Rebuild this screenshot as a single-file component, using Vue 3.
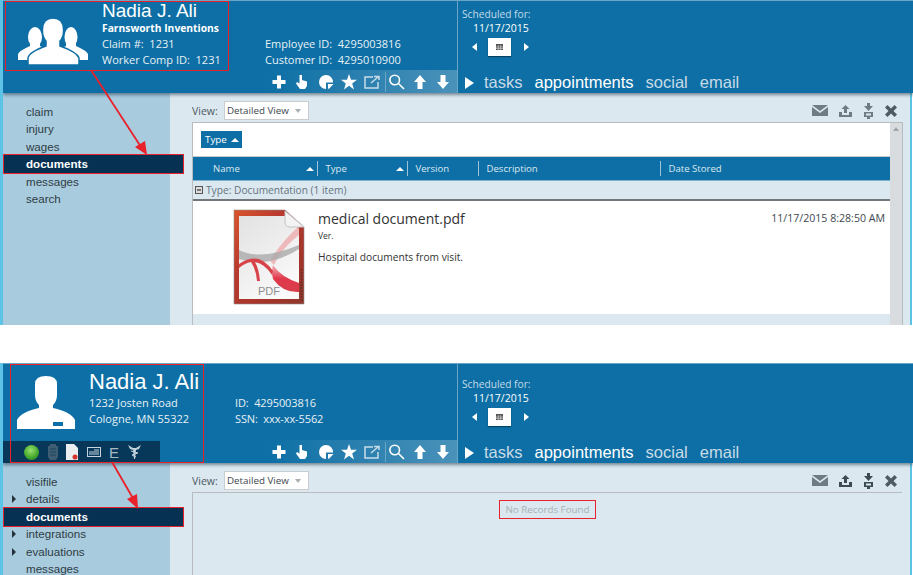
<script setup>
const tools = ['plus', 'hand', 'pie', 'star', 'share', 'search', 'up', 'down']
const tabs = [
  { label: 'tasks', active: false },
  { label: 'appointments', active: true },
  { label: 'social', active: false },
  { label: 'email', active: false }
]
const panels = [
  {
    id: 'claim',
    lines: ['Claim #:  1231', 'Worker Comp ID:  1231'],
    org: 'Farnsworth Inventions',
    ids: ['Employee ID:  4295003816', 'Customer ID:  4295010900'],
    nav: [
      { t: 'claim' }, { t: 'injury' }, { t: 'wages' },
      { t: 'documents', sel: true }, { t: 'messages' }, { t: 'search' }
    ]
  },
  {
    id: 'person',
    lines: ['1232 Josten Road', 'Cologne, MN 55322'],
    ids: ['ID:  4295003816', 'SSN:  xxx-xx-5562'],
    nav: [
      { t: 'visifile' }, { t: 'details', caret: true },
      { t: 'documents', sel: true }, { t: 'integrations', caret: true },
      { t: 'evaluations', caret: true }, { t: 'messages' }
    ]
  }
]
const cols = [
  { t: 'Name', w: 124, sort: true },
  { t: 'Type', w: 90, sort: true },
  { t: 'Version', w: 71 },
  { t: 'Description', w: 182 },
  { t: 'Date Stored', w: 230 }
]
</script>

<template>
  <div class="page">
    <section v-for="p in panels" :key="p.id" class="panel" :class="'panel-' + p.id">
      <header class="hd">
        <div class="hd-left">
          <div class="top">
            <div class="who">
              <svg v-if="p.id === 'claim'" class="avatar" width="70" height="48" viewBox="0 0 70 48">
                <g fill="#fff">
                  <ellipse cx="17" cy="20" rx="7" ry="10" />
                  <path d="M0 43V37Q1 34 12 29V26H22V29L30 33V43Z" />
                  <ellipse cx="53" cy="20" rx="6.500" ry="10" />
                  <path d="M70 43V37Q69 34 58 29V26H48V29L40 33V43Z" />
                  <g stroke="#0d6fa5" stroke-width="1.500">
                    <path d="M10 48V41Q11 35 28 29V24Q24 20 24.500 12Q25 1 35 1Q45 1 45.500 12Q46 20 42 24V29Q59 35 61 41V48Z" />
                  </g>
                </g>
              </svg>
              <svg v-else class="avatar" width="58" height="55" viewBox="0 0 58 55">
                <path fill="#fff" d="M18 9Q18 1 29 1Q40 1 40 9V20Q40 26 36 30V33Q54 37 58 45V54H0V45Q4 37 22 33V30Q18 26 18 20Z" />
                <rect x="36" y="47" width="10" height="4" fill="#0d6fa5" />
              </svg>
              <div class="who-text">
                <div class="name">Nadia J. Ali</div>
                <div v-if="p.org" class="line org">{{ p.org }}</div>
                <div v-for="l in p.lines" :key="l" class="line">{{ l }}</div>
              </div>
            </div>
            <div class="ids">
              <div v-for="l in p.ids" :key="l" class="line">{{ l }}</div>
            </div>
          </div>
          <div class="bottom">
            <div v-if="p.id === 'person'" class="status">
              <span class="dot"></span>
              <svg width="10" height="17" viewBox="0 0 10 17"><path fill="#3f5e74" d="M2 0H8V2H10V13L8 16H2L0 13V2H2Z" /><path stroke="#1f4560" d="M2 5H8M2 8H8M2 11H8" /></svg>
              <svg width="12" height="16" viewBox="0 0 12 16"><path fill="#e9edf0" d="M0 0H8L12 4V16H0Z" /><circle cx="9" cy="13" r="2.500" fill="#d5342c" /></svg>
              <svg width="14" height="10" viewBox="0 0 14 10"><rect x=".5" y=".5" width="13" height="9" fill="none" stroke="#c6d3dc" /><path stroke="#c6d3dc" d="M2 5H12M7 3H12M2 7H12" /></svg>
              <span class="e">E</span>
              <svg width="13" height="14" viewBox="0 0 13 14"><path fill="#bfd0da" d="M0 0L5 3H8L13 0L11 4L8 5L7 14H6L5 5L2 4Z" /><path stroke="#bfd0da" fill="none" d="M3 6L10 8L4 10L8 12" /></svg>
            </div>
            <div class="tools">
              <template v-for="t in tools" :key="t">
                <span v-if="t === 'search'" class="sep"></span>
                <svg class="tool" width="16" height="16" viewBox="0 0 16 16">
                  <path v-if="t === 'plus'" fill="#fff" d="M6 1.500H10V6H14.500V10H10V14.500H6V10H1.500V6H6Z" />
                  <path v-else-if="t === 'hand'" fill="#fff" d="M5.500 1H8V6L13 7.500V12L11 15H6L2 9.500L3 8L5.500 9.500Z" />
                  <path v-else-if="t === 'pie'" fill="#fff" d="M8 1A7 7 0 1 0 8 15V8.500H15A7 7 0 0 0 8 1ZM10 10H15.500L11 14.800H10Z" />
                  <path v-else-if="t === 'star'" fill="#fff" d="M8 0L10 5.800H16L11.200 9.400L13 15.500L8 11.800L3 15.500L4.800 9.400L0 5.800H6Z" />
                  <path v-else-if="t === 'share'" fill="none" stroke="#c8dce8" stroke-width="1.500" d="M9 3H1V14H14V8M7 9L14 3M10 2.500H15V6" />
                  <path v-else-if="t === 'search'" fill="none" stroke="#fff" stroke-width="1.600" d="M10.500 6A4.800 4.800 0 1 1 .900 6A4.800 4.800 0 1 1 10.500 6ZM9.500 9.500L15 15" />
                  <path v-else-if="t === 'up'" fill="#fff" d="M8 1L14 8H10.500V15H5.500V8H2Z" />
                  <path v-else fill="#fff" d="M8 15L14 8H10.500V1H5.500V8H2Z" />
                </svg>
              </template>
            </div>
          </div>
        </div>
        <div class="hd-right">
          <div class="sched">
            <div class="sched-label">Scheduled for:</div>
            <div class="sched-date">11/17/2015</div>
            <div class="sched-nav">
              <i class="tri-l"></i>
              <span class="cal">
                <svg width="7" height="6" viewBox="0 0 7 6"><path fill="#555" d="M0 0H7V6H0Z" /><path stroke="#ccc" stroke-width=".7" d="M2.300 1V6M4.700 1V6M0 3H7M0 4.500H7" /></svg>
              </span>
              <i class="tri-r"></i>
            </div>
          </div>
          <nav class="tabs">
            <i class="tab-play"></i>
            <span v-for="t in tabs" :key="t.label" class="tab" :class="{ on: t.active }">{{ t.label }}</span>
          </nav>
        </div>
      </header>

      <div class="body">
        <aside class="side">
          <div v-for="n in p.nav" :key="n.t" class="item" :class="{ sel: n.sel }">
            <span class="caret"><i v-if="n.caret"></i></span>{{ n.t }}
          </div>
        </aside>
        <main class="main">
          <div class="view-row">
            <span class="view-label">View:</span>
            <span class="select">Detailed View<i></i></span>
            <div class="actions">
              <svg width="16" height="11" viewBox="0 0 16 11"><path fill="#6f7c84" d="M0 0H16L8 6ZM0 2L8 8L16 2V11H0Z" /></svg>
              <svg width="13" height="12" viewBox="0 0 13 12"><path :fill="p.id === 'person' ? '#3c4a52' : '#6f7c84'" d="M6.500 0L10.500 4H8V8H5V4H2.500ZM0 7H3V10H10V7H13V12H0Z" /></svg>
              <svg width="11" height="16" viewBox="0 0 11 16"><path :fill="p.id === 'person' ? '#3c4a52' : '#6f7c84'" d="M4 0H7V3H10L5.500 8L1 3H4ZM1 9H10V14H7V16H4V14H1ZM3 10.500V12.500H8V10.500Z" /></svg>
              <svg width="12" height="12" viewBox="0 0 12 12"><path fill="#4f5b62" d="M2.500 0L6 3.500L9.500 0L12 2.500L8.500 6L12 9.500L9.500 12L6 8.500L2.500 12L0 9.500L3.500 6L0 2.500Z" /></svg>
            </div>
          </div>

          <div v-if="p.id === 'claim'" class="grid">
            <div class="g-main">
              <div class="grouping"><span class="chip">Type<i class="sort"></i></span></div>
              <div class="thead">
                <div v-for="(c, i) in cols" :key="c.t" class="th" :class="{ first: i === 0 }" :style="{ width: c.w + 'px' }">
                  <span>{{ c.t }}</span><i v-if="c.sort" class="sort"></i>
                </div>
              </div>
              <div class="group"><span class="minus"></span>Type: Documentation (1 item)</div>
              <div class="row">
                <svg class="pdf" width="72" height="96" viewBox="0 0 72 96">
                  <defs>
                    <linearGradient id="pdfFrame" x1="0" y1="0" x2="1" y2="1">
                      <stop offset="0" stop-color="#d9542c" />
                      <stop offset=".35" stop-color="#b83a2e" />
                      <stop offset=".75" stop-color="#a3342b" />
                      <stop offset="1" stop-color="#8f3a2c" />
                    </linearGradient>
                    <linearGradient id="pdfPage" x1="0" y1="0" x2=".6" y2="1">
                      <stop offset="0" stop-color="#e2e2e2" />
                      <stop offset=".5" stop-color="#ededed" />
                      <stop offset="1" stop-color="#fafafa" />
                    </linearGradient>
                    <linearGradient id="pdfRed" x1="0" y1="0" x2="0" y2="1">
                      <stop offset="0" stop-color="#f3b6bb" />
                      <stop offset=".5" stop-color="#e0384a" />
                      <stop offset="1" stop-color="#d8404d" />
                    </linearGradient>
                  </defs>
                  <path fill="url(#pdfFrame)" stroke="#8d8d8d" stroke-width=".6" d="M1 1H52L71 18V95H1Z" />
                  <path fill="url(#pdfPage)" d="M6 7H52L66 20V90H6Z" />
                  <path fill="#eea7a9" opacity=".75" d="M66 17V26Q48 40 41 56L37 52Q48 33 66 17Z" />
                  <path fill="#aaa" opacity=".8" d="M6 41Q28 52 66 36V40Q34 60 6 50Z" />
                  <path fill="url(#pdfRed)" d="M40 56Q48 68 66 74V83Q50 84 40 70Q38 62 40 56Z" />
                  <path fill="#d8434a" d="M6 55Q20 46 30 52Q36 56 40 62L39 66Q32 55 22 53Q26 60 27 72L24 72Q23 60 18 53Q12 54 6 59Z" />
                  <path fill="#f3f3f3" stroke="#c4c4c4" d="M52 2L71 18H57Q52 18 52 13Z" />
                  <path stroke="#5d2a22" stroke-width="2" stroke-dasharray="2 1" d="M68.500 60V92" opacity=".6" />
                  <text x="25" y="86" class="pdf-text">PDF</text>
                </svg>
                <div class="doc">
                  <div class="doc-title">medical document.pdf</div>
                  <div class="doc-ver">Ver.</div>
                  <div class="doc-desc">Hospital documents from visit.</div>
                </div>
                <div class="doc-date">11/17/2015 8:28:50 AM</div>
              </div>
              <div class="g-foot"></div>
            </div>
            <div class="scroll"><i></i></div>
          </div>

          <div v-else class="grid-empty">
            <span class="empty">No Records Found</span>
          </div>
        </main>
      </div>

      <div class="mark-box"></div>
      <svg class="mark-arrow" width="913" height="212" viewBox="0 0 913 212">
        <template v-if="p.id === 'claim'">
          <path d="M91 70L143 150" stroke="#e8212b" stroke-width="1.800" />
          <path d="M147 155L135 147L145 141Z" fill="#e8212b" />
        </template>
        <template v-else>
          <path d="M112 99L134 137" stroke="#e8212b" stroke-width="1.800" />
          <path d="M138 146L127 136L137 131Z" fill="#e8212b" />
        </template>
      </svg>
    </section>
  </div>
</template>

<style>
html, body { margin: 0; background: #fff; }
</style>

<style scoped>
.page { width: 913px; height: 575px; overflow: hidden; background: #fff; font-family: "Open Sans", "Liberation Sans", sans-serif; }
.panel { position: relative; width: 913px; box-sizing: border-box; border-left: 3px solid #5cc3e6; display: flex; flex-direction: column; overflow: hidden; }
.panel-claim { height: 325px; margin-bottom: 38px; }
.panel-person { height: 212px; }

.hd { display: flex; flex: none; background: #0d6fa5; border-top: 1px solid #6aa5c6; box-sizing: border-box; box-shadow: 0 2px 3px rgba(40, 60, 75, .55); position: relative; z-index: 2; color: #e8f1f6; font-size: 11px; }
.panel-claim .hd { height: 93px; }
.panel-person .hd { height: 100px; }
.hd-left { width: 455px; flex: none; display: flex; flex-direction: column; justify-content: space-between; border-right: 1px solid #6aa5c6; box-sizing: border-box; }
.top { display: flex; }
.who { display: flex; box-sizing: border-box; }
.panel-claim .who { width: 262px; padding-left: 15px; }
.panel-person .who { width: 232px; padding-left: 14px; }
.panel-claim .avatar { margin-top: 16px; }
.panel-person .avatar { margin-top: 11px; }
.panel-claim .who-text { margin-left: 14px; }
.panel-person .who-text { margin-left: 14px; padding-top: 5px; }
.name { font-family: "Liberation Sans", Arial, sans-serif; color: #fff; white-space: nowrap; }
.panel-claim .name { font-size: 19px; line-height: 19px; }
.panel-person .name { font-size: 22px; line-height: 26px; }
.line { white-space: pre; line-height: 16px; }
.panel-person .line { line-height: 15.500px; }
.org { font-weight: 700; color: #fff; font-size: 10.300px; }
.panel-claim .ids { margin-top: 35px; }
.panel-person .ids { margin-top: 31px; letter-spacing: -.1px; }
.bottom { display: flex; align-items: flex-end; justify-content: space-between; }
.tools { margin-left: auto; width: 189px; height: 23px; flex: none; box-sizing: border-box; display: flex; align-items: center; gap: 7.250px; padding-left: 3px; background: linear-gradient(90deg, #0d6fa5, #4a92ba); }
.tool { flex: none; }
.sep { width: 1px; height: 20px; background: #6aa5c6; margin: 0 -5px 0 -2px; flex: none; }
.status { width: 157px; height: 22px; flex: none; background: #07385a; display: flex; align-items: center; gap: 8.500px; padding-left: 21px; box-sizing: border-box; }
.dot { width: 15px; height: 15px; border-radius: 50%; background: radial-gradient(circle at 45% 35%, #9be06c, #3fa52c 60%, #23801e); flex: none; }
.e { color: #a9bac5; font: 15px/1 "Liberation Sans", sans-serif; }

.hd-right { flex: 1; display: flex; flex-direction: column; justify-content: space-between; padding-left: 4px; min-width: 0; }
.panel-claim .sched { padding-top: 6px; }
.panel-person .sched { padding-top: 13px; }
.sched-label { font-size: 10.200px; line-height: 14px; color: #c4dbe8; }
.sched-date { font-size: 10.500px; line-height: 15px; padding-left: 11px; color: #fff; }
.sched-nav { display: flex; align-items: center; margin-top: 2px; padding-left: 10px; }
.tri-l { width: 0; height: 0; border: 4px solid transparent; border-left: 0; border-right: 5px solid #fff; }
.tri-r { width: 0; height: 0; border: 4px solid transparent; border-right: 0; border-left: 5px solid #fff; }
.cal { width: 23px; height: 18px; background: #fff; margin: 0 13px 0 11px; display: flex; align-items: center; justify-content: center; box-shadow: 0 1px 1px rgba(0, 0, 0, .4); }
.tabs { display: flex; align-items: center; height: 21px; font-family: "Liberation Sans", Arial, sans-serif; font-size: 16.500px; color: #c9dbe6; }
.tab-play { width: 0; height: 0; border: 6px solid transparent; border-right: 0; border-left: 9px solid #fff; margin-right: 10px; margin-left: 3px; }
.tab { margin-right: 12px; }
.tab.on { color: #fff; }

.body { flex: 1; display: flex; min-height: 0; background: #dbe8f0; border-right: 2px solid #5cc3e6; margin-right: 1px; }
.side { width: 167px; flex: none; background: #a8cbde; padding-top: 9.500px; box-sizing: border-box; font: 11.600px/17.600px "Liberation Sans", Arial, sans-serif; color: #2f3c44; }
.item { display: flex; align-items: center; height: 17.600px; padding-left: 9px; white-space: nowrap; }
.caret { width: 14px; flex: none; display: flex; }
.caret i { width: 0; height: 0; border: 4px solid transparent; border-right: 0; border-left: 4px solid #26323a; }
.item.sel { width: 181px; height: 20px; margin: -1px 0 -1.400px; padding-left: 8px; box-sizing: border-box; position: relative; z-index: 3; background: #063153; color: #fff; font-weight: 700; border: 1px solid #e8212b; }

.main { flex: 1; padding-left: 22px; min-width: 0; padding-right: 7px; color: #4c5a62; }
.view-row { height: 29px; display: flex; align-items: center; box-sizing: border-box; padding-top: 6px; font-size: 10.500px; }
.view-label { width: 32px; flex: none; }
.select { width: 85px; height: 19px; box-sizing: border-box; border: 1px solid #c9cdd0; background: #fff; display: flex; align-items: center; justify-content: space-between; padding: 0 7px 0 2px; color: #3b474e; font-size: 9.800px; }
.select i { width: 0; height: 0; border: 3.500px solid transparent; border-bottom: 0; border-top: 4px solid #a9b0b4; }
.actions { margin-left: auto; display: flex; align-items: center; gap: 11px; padding-right: 6px; }

.grid { display: flex; flex: none; border-top: 1px solid #b9bcbe; border-left: 1px solid #b9bcbe; }
.g-main { width: 697px; flex: none; }
.grouping { height: 33px; background: #fff; display: flex; align-items: center; padding-left: 8px; border-bottom: 1px solid #c6cbce; box-sizing: content-box; }
.chip { height: 17px; width: 41px; box-sizing: border-box; background: #0d6fa5; color: #fff; display: flex; align-items: center; gap: 4px; padding-left: 4px; font-size: 9.800px; }
.sort { width: 0; height: 0; border: 4px solid transparent; border-top: 0; border-bottom: 4px solid #fff; flex: none; }
.thead { display: flex; height: 23px; background: #0d6fa5; align-items: center; color: #dce9f1; font-size: 9.600px; border-bottom: 1px solid #7fb0cc; }
.th { height: 15px; box-sizing: border-box; border-left: 1px solid #9fc3d8; padding-left: 7.500px; padding-right: 3px; display: flex; align-items: center; justify-content: space-between; flex: none; }
.th.first { border-left: 0; padding-left: 20px; }
.group { height: 18px; display: flex; align-items: center; font-size: 10.200px; color: #66747e; border-bottom: 2px solid #72777b; padding-left: 2px; }
.minus { width: 8px; height: 8px; box-sizing: border-box; border: 1px solid #555; background: linear-gradient(#777, #777) center/4px 2px no-repeat, #ddd; margin-right: 3px; }
.row { height: 113px; background: #fff; display: flex; align-items: flex-start; padding-left: 40px; padding-right: 5px; box-sizing: border-box; }
.pdf { margin-top: 8px; flex: none; }
.pdf-text { font: 11px "Liberation Sans", sans-serif; fill: #8e8e8e; }
.doc { margin-left: 13px; color: #333; }
.doc-title { font-size: 14px; line-height: 20px; margin-top: 8px; white-space: nowrap; }
.doc-ver { font-size: 8.500px; line-height: 12px; margin-top: 1px; }
.doc-desc { font-size: 10.200px; line-height: 14px; margin-top: 8px; white-space: nowrap; }
.doc-date { margin-left: auto; font-size: 10.600px; margin-top: 10px; line-height: 14px; color: #3d474e; white-space: nowrap; }
.g-foot { height: 40px; background: #dbe8f0; }
.scroll { width: 12px; flex: none; background: #d8dcde; border-right: 1px solid #b9bcbe; position: relative; display: flex; justify-content: center; padding-top: 4px; }
.scroll i { width: 0; height: 0; border: 3.500px solid transparent; border-top: 0; border-bottom: 4px solid #a0a6aa; }

.grid-empty { border-top: 1px solid #b9bcbe; border-left: 1px solid #b9bcbe; height: 90px; width: 710px; display: flex; justify-content: center; align-items: flex-start; padding-top: 7px; box-sizing: border-box; }
.empty { width: 97px; height: 19px; box-sizing: border-box; border: 1px solid #e8212b; color: #aab0b4; font-size: 9.800px; display: flex; align-items: center; justify-content: center; white-space: nowrap; }

.mark-box { position: absolute; border: 1px solid #e8212b; box-sizing: border-box; z-index: 3; pointer-events: none; }
.panel-claim .mark-box { left: 2px; top: 1px; width: 224px; height: 70px; }
.panel-person .mark-box { left: 7px; top: 1px; width: 194px; height: 99px; }
.mark-arrow { position: absolute; left: -3px; top: 0; z-index: 3; pointer-events: none; }
</style>
